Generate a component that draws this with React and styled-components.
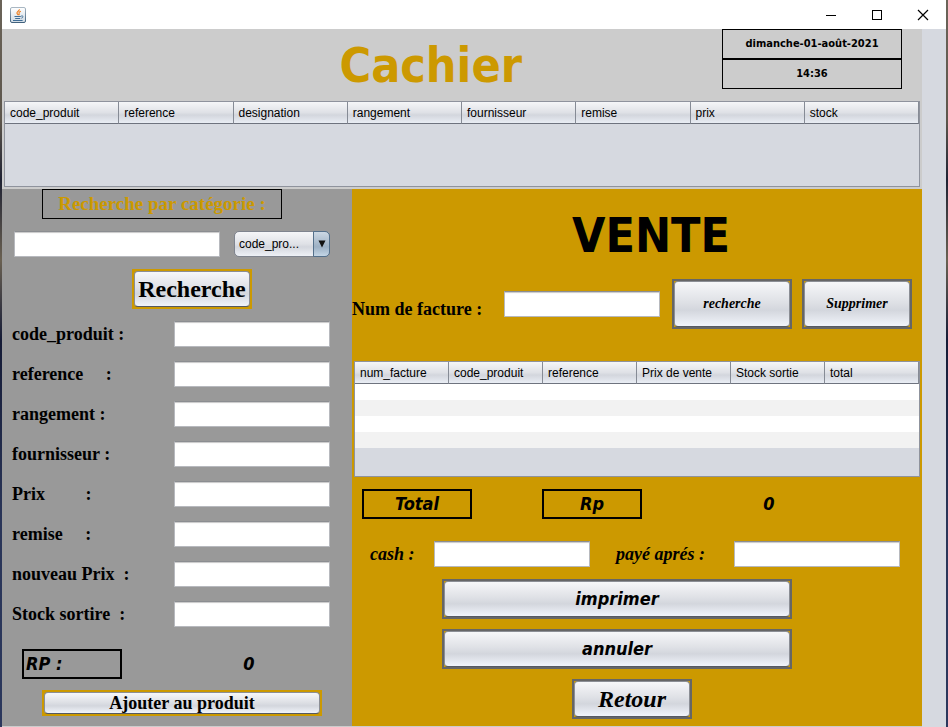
import React from 'react';
import styled, { createGlobalStyle, css } from 'styled-components';

const gold = '#cc9900';
const nimbus = '#d6d9e0';
const sans = '"DejaVu Sans Condensed", "DejaVu Sans", Tahoma, sans-serif';
const serif = '"Liberation Serif", "Times New Roman", serif';
const ui = '"Liberation Sans", Arial, sans-serif';

const GlobalStyle = createGlobalStyle`
  *, *::before, *::after { box-sizing: border-box; }
  html, body { margin: 0; padding: 0; }
  body { background: #e4e2df; color: #000; font: 12px/16px ${ui}; }
  h1, h2, output { margin: 0; display: block; }
`;

const Desktop = styled.div`
  min-height: 100vh;
  display: flex;
  padding: 0 2px;
  background: linear-gradient(#6b6459 0, #5d564c 120px, #1f2233 180px, #6a6152 260px, #151b36 340px, #2a3558 520px, #2b375c 100%);
`;

const Frame = styled.div`
  flex: 1;
  min-width: 0;
  display: flex;
  flex-direction: column;
  background: ${nimbus};
`;

const TitleBar = styled.header`
  display: flex;
  align-items: center;
  justify-content: space-between;
  height: 29px;
  padding-left: 8px;
  background: #fff;
`;

const WindowButtons = styled.div`
  display: flex;
`;

const WindowButton = styled.button`
  display: grid;
  place-items: center;
  width: 46px;
  height: 26px;
  padding: 0;
  border: 0;
  background: none;
`;

const Content = styled.main`
  flex: 1;
  display: flex;
  flex-direction: column;
  margin-right: 24px;
  background: #ccc;
`;

const Banner = styled.div`
  display: grid;
  grid-template-columns: 1fr 180px;
  height: 72px;
  padding-right: 20px;
`;

const Title = styled.h1`
  justify-self: end;
  align-self: center;
  margin-right: 200px;
  color: ${gold};
  font: bold 48px/60px ${sans};
`;

const Clock = styled.div`
  display: flex;
  flex-direction: column;
`;

const ClockCell = styled.div`
  height: 30px;
  border: 1px solid #000;
  font: bold 11px/28px ${sans};
  text-align: center;
`;

const TableFrame = styled.div`
  height: ${(p) => p.$height}px;
  margin: ${(p) => p.$margin};
  border: 1px solid #8f939d;
  background: ${nimbus};
`;

const Table = styled.table`
  width: 100%;
  table-layout: fixed;
  border-collapse: separate;
  border-spacing: 0;
`;

const HeadCell = styled.th`
  height: 22px;
  padding: 0 5px;
  border-right: 1px solid #868b95;
  border-bottom: 1px solid #6e737e;
  background: linear-gradient(#f5f6f8, #dfe1e6 50%, #d3d6dd 62%, #e9edf4);
  font: 12px/20px ${ui};
  text-align: left;
  white-space: nowrap;
`;

const BodyRow = styled.tr`
  height: 16px;
  background: #fff;
  &:nth-child(even) { background: #f2f2f2; }
`;

const BodyCell = styled.td`
  padding: 0;
`;

const Columns = styled.div`
  flex: 1;
  display: grid;
  grid-template-columns: 350px 1fr;
  margin-bottom: 1px;
`;

const SearchPanel = styled.form`
  display: flex;
  flex-direction: column;
  padding: 0 22px 10px 10px;
  background: #999;
`;

const SalePanel = styled.form`
  display: flex;
  flex-direction: column;
  background: ${gold};
`;

const CategoryTitle = styled.h2`
  width: 240px;
  height: 30px;
  margin-left: 30px;
  border: 1px solid #000;
  color: ${gold};
  font: bold 19px/28px ${serif};
  text-align: center;
`;

const SearchRow = styled.div`
  display: grid;
  grid-template-columns: 1fr 96px;
  gap: 14px;
  margin: 12px 0 0 2px;
`;

const TextInput = styled.input`
  width: 100%;
  min-width: 0;
  height: 26px;
  padding: 0 6px;
  border: 1px solid #b7b9be;
  border-top-color: #8b8d91;
  border-radius: 0;
  background: #fff;
  box-shadow: inset 0 2px 1px -1px #c8c8c8;
  font: 12px/16px ${ui};
`;

const SelectBox = styled.div`
  position: relative;
`;

const Select = styled.select`
  appearance: none;
  width: 100%;
  height: 26px;
  padding: 0 18px 0 4px;
  border: 1px solid #7f848e;
  border-radius: 5px;
  background: linear-gradient(#f5f6f8, #dfe1e6 50%, #d3d6dd 62%, #eef1f6);
  color: #000;
  font: 12px/22px ${ui};
`;

const SelectArrow = styled.span`
  position: absolute;
  top: 0;
  right: 0;
  display: grid;
  place-items: center;
  width: 17px;
  height: 26px;
  border: 1px solid #54708b;
  border-radius: 0 5px 5px 0;
  background: linear-gradient(#ccd8e4, #a5b7c9 50%, #9cb0c4 62%, #c4d6e6);
  pointer-events: none;
`;

const Button = styled.button`
  display: grid;
  width: ${(p) => p.$width || 'auto'};
  height: ${(p) => p.$height}px;
  padding: 0;
  border: 2px solid ${(p) => p.$edge || '#666'};
  background: ${gold};
  color: #000;
  font: ${(p) => p.$font};
  white-space: nowrap;
`;

const ButtonFace = styled.span`
  display: grid;
  place-items: center;
  width: 100%;
  height: 100%;
  border: 1px solid #8b8e95;
  border-bottom-color: #555962;
  border-radius: 4px;
  background: linear-gradient(#f6f7f9, #dfe1e6 45%, #d3d6dd 64%, #f1f4fa);
`;

const SearchAction = styled.div`
  display: flex;
  justify-content: center;
  margin: 12px 0 5px 42px;
`;

const FieldRow = styled.div`
  display: grid;
  grid-template-columns: 1fr 156px;
  align-items: center;
  height: 40px;
`;

const Label = styled.label`
  padding-top: ${(p) => (p.$low ? 10 : 0)}px;
  font: ${(p) => (p.$italic ? 'italic ' : '')}bold 18px/24px ${serif};
  white-space: pre;
`;

const RpRow = styled.div`
  display: grid;
  grid-template-columns: 100px 1fr;
  align-items: center;
  margin: 15px 0 11px 10px;
`;

const Figure = styled.output`
  font: italic bold 18px/26px ${sans};
  text-align: center;
  white-space: nowrap;
  ${(p) => p.$boxed && css`
    height: 30px;
    border: 2px solid #000;
  `}
  ${(p) => p.$start && css`
    padding-left: 2px;
    text-align: left;
  `}
`;

const RpValue = styled.div`
  padding-left: 46px;
`;

const AddAction = styled.div`
  display: grid;
  padding: 0 8px 0 30px;
`;

const SaleTitle = styled.h2`
  padding: 16px 0 0 28px;
  font: bold 48px/60px ${sans};
  text-align: center;
`;

const InvoiceRow = styled.div`
  display: grid;
  grid-template-columns: 152px 1fr 120px 120px;
  align-items: center;
  margin: 14px 10px 32px 0;
`;

const InvoiceField = styled.div`
  padding-right: 12px;
`;

const DeleteAction = styled.div`
  display: grid;
  padding-left: 10px;
`;

const Totals = styled.div`
  display: grid;
  grid-template-columns: 110px 100px 1fr;
  column-gap: 70px;
  padding-left: 10px;
`;

const TotalValue = styled.div`
  display: grid;
  width: 114px;
  align-items: center;
`;

const PaymentRow = styled.div`
  display: grid;
  grid-template-columns: 64px 156px 144px 1fr;
  align-items: center;
  margin: 22px 22px 0 18px;
`;

const PaidLabel = styled.div`
  padding-left: 26px;
`;

const Actions = styled.div`
  display: flex;
  flex-direction: column;
  align-items: center;
  gap: 10px;
  padding: 12px 40px 7px 0;
`;

const FinalAction = styled.div`
  display: grid;
  padding-left: 30px;
`;

const productColumns = ['code_produit', 'reference', 'designation', 'rangement', 'fournisseur', 'remise', 'prix', 'stock'];
const saleColumns = ['num_facture', 'code_produit', 'reference', 'Prix de vente', 'Stock sortie', 'total'];
const fields = [
  ['code', 'code_produit :'],
  ['reference', 'reference     :'],
  ['rangement', 'rangement :'],
  ['fournisseur', 'fournisseur :'],
  ['prix', 'Prix         :'],
  ['remise', 'remise     :'],
  ['nouveau', 'nouveau Prix  :'],
  ['stock', 'Stock sortire  :'],
];

function DataTable({ columns, rows = 0, height, margin, label }) {
  return (
    <TableFrame $height={height} $margin={margin}>
      <Table aria-label={label}>
        <thead>
          <tr>{columns.map((c) => <HeadCell key={c} scope="col">{c}</HeadCell>)}</tr>
        </thead>
        <tbody>
          {Array.from({ length: rows }, (_, r) => (
            <BodyRow key={r}>{columns.map((c) => <BodyCell key={c} />)}</BodyRow>
          ))}
        </tbody>
      </Table>
    </TableFrame>
  );
}

function Action({ children, ...rest }) {
  return (
    <Button type="button" {...rest}>
      <ButtonFace>{children}</ButtonFace>
    </Button>
  );
}

function JavaIcon() {
  return (
    <svg width="16" height="16" viewBox="0 0 16 16" fill="none" aria-hidden="true">
      <defs>
        <linearGradient id="javaTile" x1="0" y1="0" x2="0" y2="1">
          <stop offset="0" stopColor="#fff" />
          <stop offset="1" stopColor="#cfdae3" />
        </linearGradient>
        <linearGradient id="javaEdge" x1="0" y1="0" x2="0" y2="1">
          <stop offset="0" stopColor="#a9b7c3" />
          <stop offset="1" stopColor="#41617d" />
        </linearGradient>
      </defs>
      <rect x="0.5" y="0.5" width="15" height="15" rx="1.5" fill="url(#javaTile)" stroke="url(#javaEdge)" />
      <path d="M9.3 2.2c.6 1.5-2.9 2.5-2.4 4 .2.7 1 1.1 1.300 1.900M10.800 4.300c-1.200.5-2.200 1.200-1.700 2.100.3.6.3 1-.3 1.700" stroke="#ee7d1c" strokeWidth="1.1" />
      <path d="M4.500 9.500h6.300M5.200 11.500h5M3 13.500h9.600M11.200 9c2.200-.6 2.500 1.500.2 2.200" stroke="#3f6d96" strokeWidth="1" />
    </svg>
  );
}

export default function App() {
  return (
    <Desktop>
      <GlobalStyle />
      <Frame>
        <TitleBar>
          <JavaIcon />
          <WindowButtons>
            <WindowButton type="button" aria-label="Réduire">
              <svg width="12" height="12" viewBox="0 0 12 12" stroke="#000" aria-hidden="true"><path d="M1 6.5h10" /></svg>
            </WindowButton>
            <WindowButton type="button" aria-label="Agrandir">
              <svg width="12" height="12" viewBox="0 0 12 12" fill="none" stroke="#000" aria-hidden="true"><rect x="1.5" y="1.5" width="9" height="9" /></svg>
            </WindowButton>
            <WindowButton type="button" aria-label="Fermer">
              <svg width="12" height="12" viewBox="0 0 12 12" stroke="#000" strokeWidth="1.2" aria-hidden="true"><path d="M1 1l10 10M11 1L1 11" /></svg>
            </WindowButton>
          </WindowButtons>
        </TitleBar>
        <Content>
          <Banner>
            <Title>Cachier</Title>
            <Clock>
              <ClockCell>dimanche-01-août-2021</ClockCell>
              <ClockCell>14:36</ClockCell>
            </Clock>
          </Banner>
          <DataTable label="Produits" columns={productColumns} height={86} margin="0 2px 2px" />
          <Columns>
            <SearchPanel>
              <CategoryTitle>Recherche par catégorie :</CategoryTitle>
              <SearchRow>
                <TextInput aria-label="Recherche par catégorie" />
                <SelectBox>
                  <Select aria-label="Catégorie" defaultValue="code">
                    <option value="code">code_pro...</option>
                  </Select>
                  <SelectArrow>
                    <svg width="8" height="8" viewBox="0 0 8 8" aria-hidden="true"><path d="M0.5 0.5h7L4 7.5z" fill="#111" /></svg>
                  </SelectArrow>
                </SelectBox>
              </SearchRow>
              <SearchAction>
                <Action $edge={gold} $width="120px" $height={40} $font={`bold 24px/30px ${serif}`}>Recherche</Action>
              </SearchAction>
              {fields.map(([id, text]) => (
                <FieldRow key={id}>
                  <Label htmlFor={id}>{text}</Label>
                  <TextInput id={id} />
                </FieldRow>
              ))}
              <RpRow>
                <Figure $boxed $start>RP :</Figure>
                <RpValue><Figure>0</Figure></RpValue>
              </RpRow>
              <AddAction>
                <Action $edge={gold} $height={26} $font={`bold 18px/20px ${serif}`}>Ajouter au produit</Action>
              </AddAction>
            </SearchPanel>
            <SalePanel>
              <SaleTitle>VENTE</SaleTitle>
              <InvoiceRow>
                <Label $low htmlFor="facture">Num de facture :</Label>
                <InvoiceField><TextInput id="facture" /></InvoiceField>
                <Action $height={50} $font={`italic bold 14px/20px ${serif}`}>recherche</Action>
                <DeleteAction>
                  <Action $height={50} $font={`italic bold 14px/20px ${serif}`}>Supprimer</Action>
                </DeleteAction>
              </InvoiceRow>
              <DataTable label="Vente" columns={saleColumns} rows={4} height={116} margin="0 2px 12px" />
              <Totals>
                <Figure $boxed>Total</Figure>
                <Figure $boxed>Rp</Figure>
                <TotalValue><Figure>0</Figure></TotalValue>
              </Totals>
              <PaymentRow>
                <Label $italic htmlFor="cash">cash :</Label>
                <TextInput id="cash" />
                <PaidLabel><Label $italic htmlFor="paye">payé aprés :</Label></PaidLabel>
                <TextInput id="paye" />
              </PaymentRow>
              <Actions>
                <Action $width="350px" $height={40} $font={`italic bold 18px/24px ${sans}`}>imprimer</Action>
                <Action $width="350px" $height={40} $font={`italic bold 18px/24px ${sans}`}>annuler</Action>
                <FinalAction>
                  <Action $width="120px" $height={40} $font={`italic bold 24px/30px ${serif}`}>Retour</Action>
                </FinalAction>
              </Actions>
            </SalePanel>
          </Columns>
        </Content>
      </Frame>
    </Desktop>
  );
}
